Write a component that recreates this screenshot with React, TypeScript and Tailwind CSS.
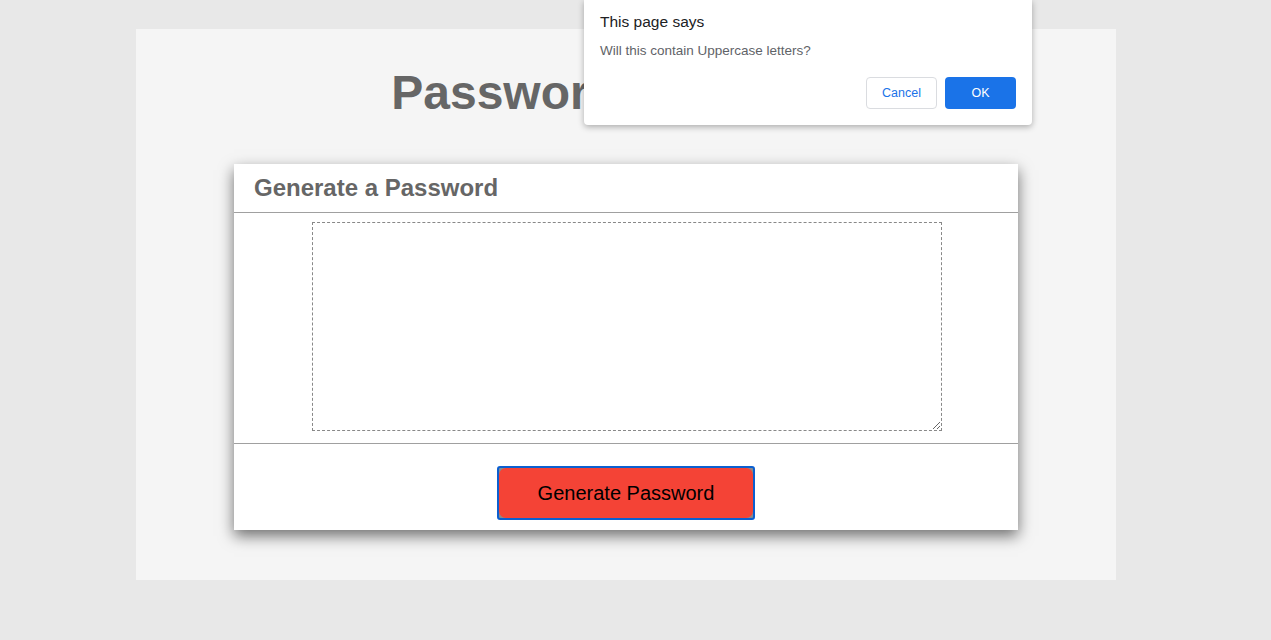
import React from "react";

export default function App() {
  return (
    <div className="relative min-h-[640px] w-full bg-[#e8e8e8] pt-[29px] font-['Liberation_Sans',Arial,sans-serif]">
      <div className="ml-[136px] flex h-[551px] w-[980px] flex-col items-center bg-[#f5f5f5]">
        <h1 className="mt-[36px] text-[48px] font-bold leading-[56px] text-[#666666]">Password Generator</h1>
        <div className="mt-[43px] w-[784px] bg-white shadow-[0px_6px_14px_rgba(0,0,0,0.55)]">
          <div className="border-b border-[#a0a0a0] px-[20px] pb-[10px] pt-[10px]">
            <h2 className="text-[24px] font-bold leading-[28px] text-[#666666]">Generate a Password</h2>
          </div>
          <div className="flex justify-center border-b border-[#a0a0a0] pb-[12px] pl-[2px] pt-[9px]">
            <textarea
              readOnly
              className="block h-[209px] w-[630px] resize border border-dashed border-[#888888] bg-white outline-none"
            />
          </div>
          <div className="flex justify-center pb-[10px] pt-[22px]">
            <button className="h-[54px] w-[258px] rounded-[3px] border-2 border-[#0b5fd0] bg-[#8a8a8a] p-0">
              <div className="flex h-full w-full items-center justify-center rounded-[7px] bg-[#f44336] text-[20px] text-black">
                Generate Password
              </div>
            </button>
          </div>
        </div>
      </div>

      <div className="absolute left-[584px] top-0 w-[448px] rounded-b-[4px] bg-white px-[16px] pb-[16px] pt-[12px] shadow-[0_2px_6px_rgba(0,0,0,0.3)] font-['Liberation_Sans',Arial,sans-serif]">
        <div className="text-[15.5px] leading-[20px] text-[#202124]">This page says</div>
        <div className="mt-[11px] text-[13.5px] leading-[16px] text-[#5f6368]">Will this contain Uppercase letters?</div>
        <div className="mt-[18px] flex justify-end gap-[8px]">
          <button className="h-[32px] w-[71px] rounded-[4px] border border-[#dadce0] bg-white text-[12.5px] text-[#1a73e8]">Cancel</button>
          <button className="h-[32px] w-[71px] rounded-[4px] bg-[#1a73e8] text-[12.5px] text-white">OK</button>
        </div>
      </div>
    </div>
  );
}
